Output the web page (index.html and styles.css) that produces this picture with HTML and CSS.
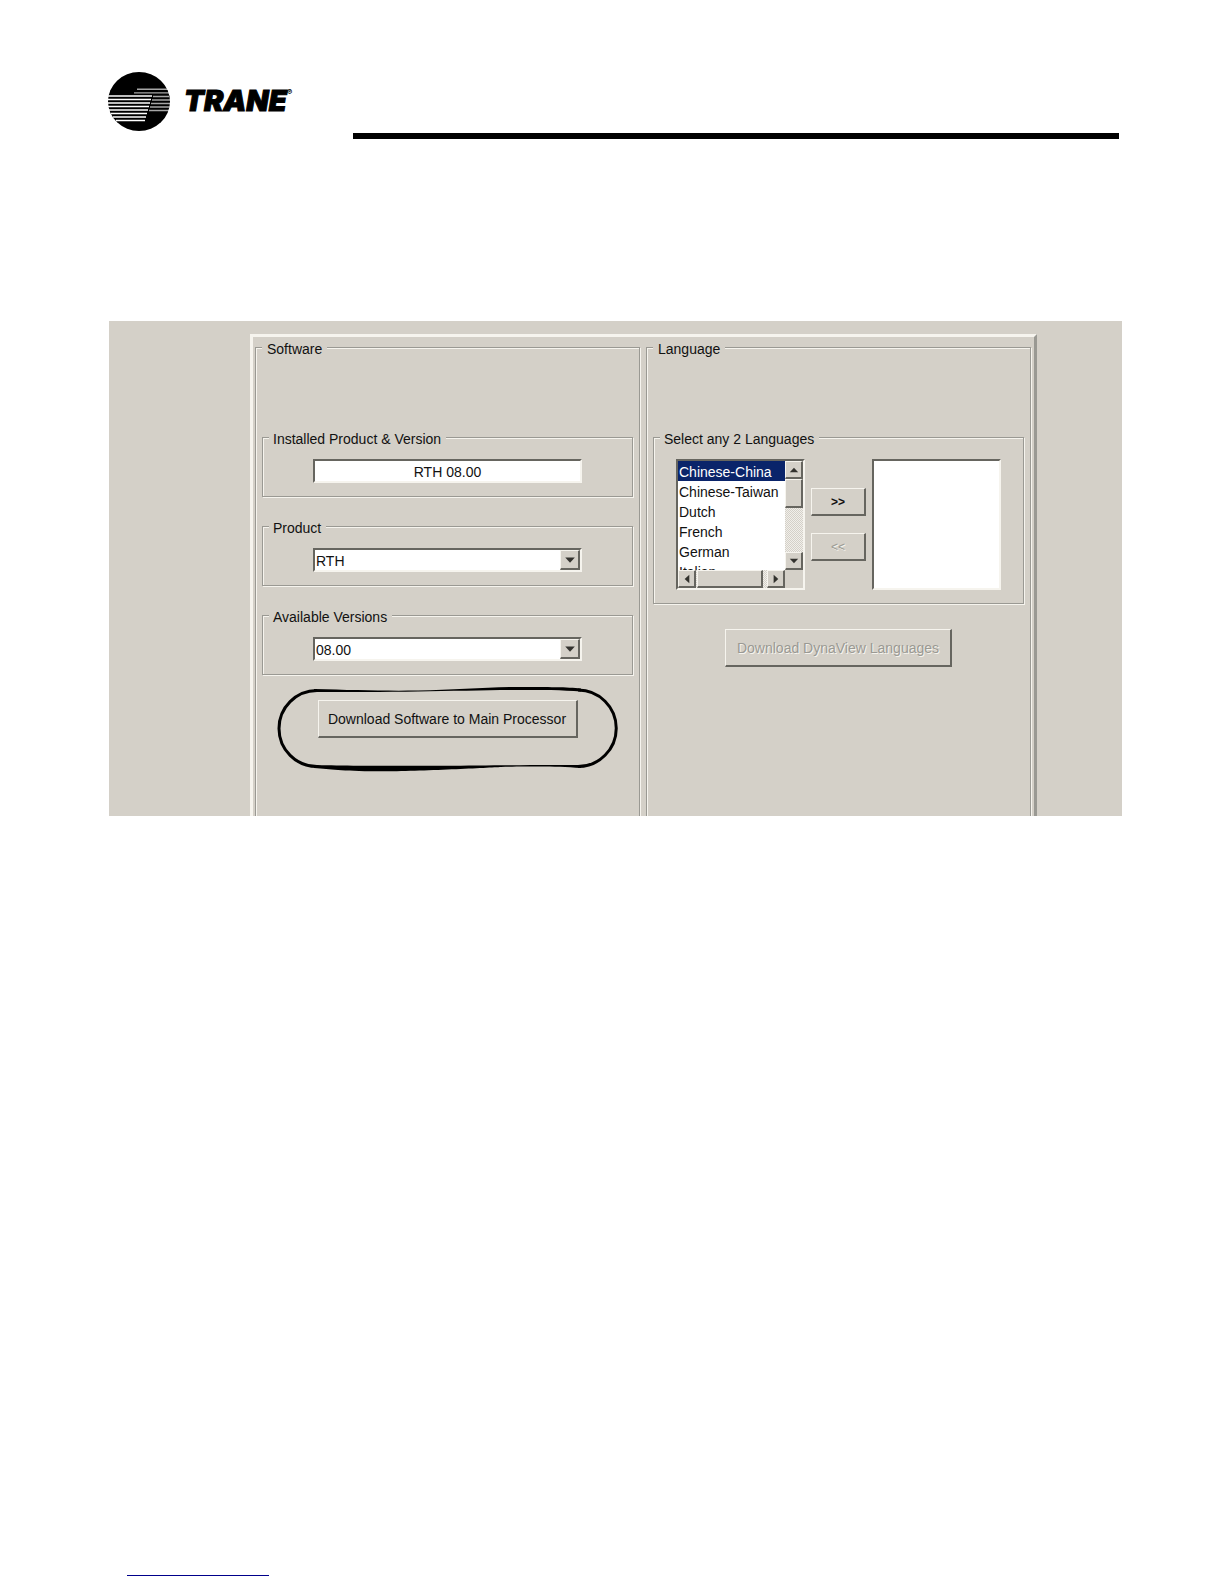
FILE: index.html
```html
<!DOCTYPE html>
<html lang="en">

<head>
 <meta charset="UTF-8">
 <meta name="viewport" content="width=device-width, initial-scale=1.0">
 <title>Trane - Software Download</title>
 <link rel="stylesheet" href="styles.css">
</head>

<body>

 <header class="page-header">
  <div class="brand">
   <svg class="brand-mark" viewBox="0 0 62 60" aria-hidden="true">
    <ellipse cx="31" cy="29.5" rx="31" ry="29.5" fill="#000" />
    <g fill="none" stroke="#fff">
     <path d="M0 24H44M0 27.500H43M0 31H42M0 34.500H41M1 38H40M3 41.500H39M5 45H38M8 48.500H37" stroke-width="1.6" />
     <path d="M29 17.300H60M26 20.900H61M45 24.500H61M44 28H62M43 31.500H62M42 35H62M41 38.500H61" stroke-width="1.4" opacity=".65" />
    </g>
   </svg>
   <span class="brand-name">TRANE<sup>&reg;</sup></span>
  </div>
  <hr class="header-rule">
 </header>

 <main class="screen">
  <form class="frame">

   <fieldset class="group column">
    <legend>Software</legend>

    <fieldset class="group">
     <legend><label for="installed">Installed Product &amp; Version</label></legend>
     <input id="installed" class="sunken field" type="text" value="RTH 08.00" readonly>
    </fieldset>

    <fieldset class="group">
     <legend><label for="product">Product</label></legend>
     <div class="sunken field combo">
      <select id="product">
       <option>RTH</option>
      </select>
      <span class="raised arrow"><svg viewBox="0 0 16 16"><path d="M4 6h9l-4.500 5z" /></svg></span>
     </div>
    </fieldset>

    <fieldset class="group">
     <legend><label for="versions">Available Versions</label></legend>
     <div class="sunken field combo">
      <select id="versions">
       <option>08.00</option>
      </select>
      <span class="raised arrow"><svg viewBox="0 0 16 16"><path d="M4 6h9l-4.500 5z" /></svg></span>
     </div>
    </fieldset>

    <div class="action circled">
     <button class="raised btn btn-software" type="button">Download Software to Main Processor</button>
     <svg class="callout" viewBox="0 0 342 86" aria-hidden="true">
      <path d="M40 4.500A38 38 0 0 0 40 80.500M301 4A38 38 0 0 1 301 80.500" fill="none" stroke="#000" stroke-width="3" />
      <path d="M37 3C75 4 105 5 141 4.500S210 1 241 1S290 1 304 2.500V5.500C285 4 265 4 241 4S175 5 141 5.500S70 6 37 6z" />
      <path d="M37 79C70 80 150 80 200 79.500S280 79 304 79V82C290 81 275 80.500 264 80.500S235 80.500 224 81S140 85.500 101 85.300S55 83 37 82z" />
     </svg>
    </div>
   </fieldset>

   <fieldset class="group column">
    <legend>Language</legend>

    <fieldset class="group">
     <legend><label for="languages">Select any 2 Languages</label></legend>
     <div class="transfer">
      <div class="sunken listbox">
       <select id="languages" size="5" multiple>
        <option selected>Chinese-China</option>
        <option>Chinese-Taiwan</option>
        <option>Dutch</option>
        <option>French</option>
        <option>German</option>
        <option>Italian</option>
       </select>
       <div class="scroll scroll-y">
        <button class="raised arrow" type="button" aria-label="Scroll up"><svg viewBox="0 0 16 16"><path d="M4 11h9l-4.500-5z" /></svg></button>
        <span class="raised thumb"></span>
        <button class="raised arrow" type="button" aria-label="Scroll down"><svg viewBox="0 0 16 16"><path d="M4 6h9l-4.500 5z" /></svg></button>
       </div>
       <div class="scroll scroll-x">
        <button class="raised arrow" type="button" aria-label="Scroll left"><svg viewBox="0 0 16 16"><path d="M11 4v9l-5-4.500z" /></svg></button>
        <span class="raised thumb"></span>
        <button class="raised arrow" type="button" aria-label="Scroll right"><svg viewBox="0 0 16 16"><path d="M6 4v9l5-4.500z" /></svg></button>
       </div>
      </div>
      <div class="movers">
       <button class="raised btn" type="button">&gt;&gt;</button>
       <button class="raised btn" type="button" disabled>&lt;&lt;</button>
      </div>
      <select class="sunken chosen" size="5" multiple aria-label="Selected languages"></select>
     </div>
    </fieldset>

    <div class="action">
     <button class="raised btn btn-languages" type="button" disabled>Download DynaView Languages</button>
    </div>
   </fieldset>

  </form>
 </main>

 <footer class="page-footer">
  <a href="#" aria-label="Back to contents"></a>
 </footer>

</body>

</html>
```

FILE: styles.css
```css
*,
*::before,
*::after {
 box-sizing: border-box;
}

:root {
 --face: #d4d0c8;
 --light: #f6f4ee;
 --shade: #9a9993;
 --dark: #66655f;
 --navy: #0a246a;
}

body {
 margin: 0;
 min-height: 100vh;
 display: flex;
 flex-direction: column;
 background: #fff;
 color: #111;
 font-family: "Liberation Sans", Arial, sans-serif;
 font-size: 14px;
 line-height: 16px;
}

button,
input,
select {
 font: inherit;
 color: inherit;
 margin: 0;
 padding: 0;
 border-radius: 0;
}

/* header */

.page-header {
 display: flex;
 align-items: flex-end;
 padding: 72px 105px 0 108px;
 height: 139px;
}

.brand {
 display: flex;
 align-items: flex-start;
 gap: 14px;
 width: 245px;
 height: 67px;
}

.brand-mark {
 width: 62px;
 height: 60px;
}

.brand-name {
 display: flex;
 color: #000;
 font-family: Inter, "Open Sans", sans-serif;
 font-size: 29px;
 font-style: italic;
 font-weight: 900;
 line-height: 58px;
 -webkit-text-stroke: 1px #000;
}

.brand-name sup {
 font-size: 8px;
 line-height: 40px;
 -webkit-text-stroke: 0;
}

.header-rule {
 flex: 1;
 height: 6px;
 margin: 0;
 border: 0;
 background: #000;
}

/* application window */

.screen {
 margin: 182px 102px 0 109px;
 padding: 13px 85px 0 141px;
 background: var(--face);
 overflow: hidden;
}

.frame {
 display: grid;
 grid-template-columns: 1fr 1fr;
 gap: 6px;
 padding: 0 3px 0 2px;
 border: 3px solid var(--light);
 border-right-color: var(--shade);
 border-bottom: 0;
}

.group {
 min-width: 0;
 margin: 0;
 padding: 12px 0 13px;
 border: 1px solid var(--shade);
 box-shadow: 1px 1px var(--light), inset 1px 1px var(--light);
}

.group legend {
 height: 20px;
 margin-left: 6px;
 padding: 4px 5px 0 4px;
 background: var(--face);
}

.group .group {
 margin-bottom: 19px;
}

.column {
 padding: 70px 6px 78px 6px;
 border-bottom: 0;
}

.column > legend {
 margin-left: 0;
 padding-left: 5px;
}

.sunken {
 background: #fff;
 border: 2px solid var(--light);
 border-top-color: var(--dark);
 border-left-color: var(--dark);
 outline: 0;
}

.raised {
 background: var(--face);
 border: 1px solid var(--light);
 border-right: 2px solid var(--dark);
 border-bottom: 2px solid var(--dark);
}

.field {
 display: flex;
 width: 269px;
 height: 24px;
 margin: 0 auto;
}

input.field {
 padding-top: 1px;
 text-align: center;
}

.combo select {
 flex: 1;
 appearance: none;
 padding: 1px 0 0 1px;
 border: 0;
 background: #fff;
 outline: 0;
}

.arrow {
 display: block;
 flex: none;
 width: 18px;
 height: 18px;
}

.arrow svg {
 display: block;
 width: 100%;
 height: 100%;
 fill: #33322e;
}

.combo .arrow {
 width: 20px;
 height: 20px;
}

/* buttons */

.action {
 display: flex;
 justify-content: center;
 padding-top: 6px;
}

.btn {
 height: 38px;
 text-align: center;
}

.btn:disabled {
 color: #9a9993;
 text-shadow: 1px 1px #f6f4ee;
}

.btn-software {
 width: 260px;
}

.btn-languages {
 width: 227px;
}

.circled {
 position: relative;
}

.callout {
 position: absolute;
 top: -8px;
 left: 50%;
 width: 342px;
 height: 86px;
 margin-left: -171px;
 pointer-events: none;
}

/* language lists */

.transfer {
 display: flex;
 justify-content: center;
 gap: 6px;
}

.listbox {
 display: grid;
 grid-template-columns: 1fr 18px;
 grid-template-rows: 1fr 18px;
 width: 129px;
 height: 131px;
 background: var(--face);
}

.listbox select {
 width: 100%;
 height: 109px;
 border: 0;
 outline: 0;
 background: #fff;
 overflow: hidden;
}

.listbox option {
 height: 20px;
 min-height: 20px;
 padding: 3px 0 0 1px;
 line-height: 17px;
}

.listbox option:checked {
 color: #fff;
 background: var(--navy) linear-gradient(var(--navy), var(--navy));
}

.scroll {
 display: flex;
 background: repeating-conic-gradient(#f1efea 0 25%, #d4d0c8 0 50%) 0 0 / 2px 2px;
}

.scroll-y {
 flex-direction: column;
}

.scroll-y .thumb {
 height: 29px;
 margin-bottom: auto;
}

.scroll-x .thumb {
 width: 66px;
 margin: 0 auto 0 1px;
}

.movers {
 display: flex;
 flex-direction: column;
 gap: 17px;
 padding-top: 29px;
}

.movers .btn {
 width: 55px;
 height: 28px;
 font-size: 12px;
 font-weight: bold;
}

.movers .btn:disabled {
 font-weight: normal;
}

.chosen {
 width: 129px;
 height: 131px;
}

/* footer */

.page-footer {
 margin-top: auto;
 padding: 0 127px 8px;
}

.page-footer a {
 display: block;
 width: 142px;
 border-bottom: 1px solid #00008b;
}
```
